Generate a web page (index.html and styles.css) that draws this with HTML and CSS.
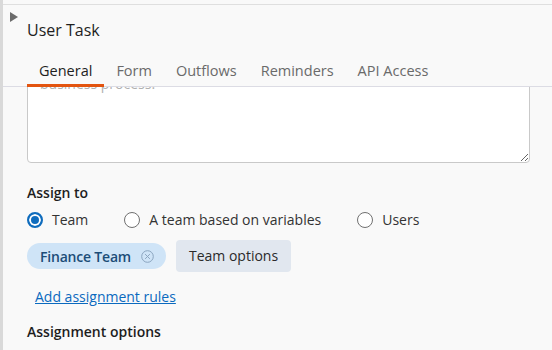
FILE: index.html
```html
<!DOCTYPE html>
<html lang="en">
<head>
<meta charset="utf-8">
<title>User Task</title>
<link rel="stylesheet" href="styles.css">
</head>
<body>
<div class="frame">
  <div class="edge"></div>
  <section class="panel">
    <header class="head">
      <svg class="toggle" width="8" height="10" viewBox="0 0 8 10"><path d="M0 0 L8 5 L0 10 Z" fill="#6b6b6b"/></svg>
      <h1 class="title">User Task</h1>
    </header>
    <nav class="tabs">
      <a class="tab active">General</a>
      <a class="tab">Form</a>
      <a class="tab">Outflows</a>
      <a class="tab">Reminders</a>
      <a class="tab">API Access</a>
    </nav>
    <div class="scroll">
      <div class="content">
        <textarea class="desc" placeholder="Describe the purpose of this task within the&#10;business process."></textarea>
        <div class="label label-assign">Assign to</div>
        <div class="radios">
          <label class="radio"><input type="radio" name="assign" checked><span>Team</span></label>
          <label class="radio"><input type="radio" name="assign"><span>A team based on variables</span></label>
          <label class="radio"><input type="radio" name="assign"><span>Users</span></label>
        </div>
        <div class="assignees">
          <span class="chip">Finance Team
            <svg class="chip-x" width="13" height="13" viewBox="0 0 13 13"><circle cx="6.5" cy="6.5" r="5.8" fill="none" stroke="#8ba5bf" stroke-width="1"/><path d="M4.4 4.4 L8.6 8.6 M8.6 4.4 L4.4 8.6" stroke="#8ba5bf" stroke-width="1" stroke-linecap="round"/></svg>
          </span>
          <button class="btn">Team options</button>
        </div>
        <a class="link" href="#">Add assignment rules</a>
        <div class="label label-options">Assignment options</div>
      </div>
    </div>
  </section>
</div>
</body>
</html>
```

FILE: styles.css
```css
* { box-sizing: border-box; }
html, body {
  margin: 0;
  padding: 0;
  background: #f9f9f9;
}
body {
  font-family: "Open Sans", "Noto Sans", sans-serif;
  font-size: 14px;
  color: #222;
}
.frame {
  display: flex;
  height: 350px;
  overflow: hidden;
}
.edge {
  width: 3px;
  flex: none;
  background: #d9d9d9;
}
.panel {
  flex: 1;
  min-width: 0;
  margin-top: 4px;
  border-top: 1px solid #dfdfdf;
  display: flex;
  flex-direction: column;
}
.head {
  display: flex;
  align-items: flex-start;
}
.toggle {
  display: block;
  flex: none;
  margin: 7px 0 0 7px;
}
.title {
  margin: 14px 0 0 9px;
  font-size: 16px;
  line-height: 22px;
  font-weight: 400;
  color: #1e1e1e;
}
.tabs {
  display: flex;
  margin-top: 19px;
  padding-left: 24px;
  border-bottom: 1px solid #dcdce4;
}
.tab {
  padding: 1px 12px 3px;
  line-height: 20px;
  font-size: 14.5px;
  color: #6a6a6a;
  border-bottom: 3px solid transparent;
  margin-bottom: -1px;
  position: relative;
  z-index: 1;
}
.tab.active {
  color: #1e1e1e;
  border-bottom-color: #e3540f;
}
.scroll {
  flex: 1;
  overflow: hidden;
  padding: 0 22px 0 24px;
}
.content {
  display: flex;
  flex-direction: column;
  align-items: flex-start;
}
.desc {
  display: block;
  width: 100%;
  height: 118px;
  margin: -42px 0 0;
  padding: 8px 12px;
  font-family: inherit;
  font-size: 14px;
  line-height: 20px;
  color: #222;
  background: #fff;
  border: 1px solid #c9c9c9;
  border-radius: 4px;
  resize: vertical;
  outline: none;
}
.desc::placeholder {
  color: #b0b0b0;
}
.label {
  font-weight: 600;
  line-height: 20px;
  color: #1e1e1e;
}
.label-assign { margin-top: 20px; }
.label-options { margin-top: 9px; }
.radios {
  display: flex;
  gap: 36px;
  margin-top: 7px;
  line-height: 20px;
}
.radio {
  display: flex;
  align-items: center;
  gap: 9px;
  color: #333;
}
.radio input {
  appearance: none;
  -webkit-appearance: none;
  margin: 0;
  width: 16px;
  height: 16px;
  border-radius: 50%;
  border: 1px solid #707070;
  background: #fff;
}
.radio input:checked {
  border: 2px solid #0f6cbd;
  background: #0f6cbd;
  box-shadow: inset 0 0 0 2px #fff;
}
.assignees {
  display: flex;
  align-items: center;
  gap: 10px;
  margin-top: 10px;
}
.chip {
  display: inline-flex;
  align-items: center;
  gap: 10px;
  height: 26px;
  padding: 0 12px 0 13px;
  border-radius: 13px;
  background: #cfe4f7;
  color: #1c4d78;
  font-weight: 600;
  letter-spacing: -0.2px;
}
.chip-x { display: block; }
.btn {
  font-family: inherit;
  font-size: 14px;
  line-height: 20px;
  padding: 6px 13px;
  border: none;
  border-radius: 4px;
  background: #e1e7ef;
  color: #2a2a2a;
}
.link {
  display: block;
  margin-top: 9px;
  padding: 6px 8px;
  line-height: 20px;
  color: #0b6abf;
  text-decoration: underline;
}
```
